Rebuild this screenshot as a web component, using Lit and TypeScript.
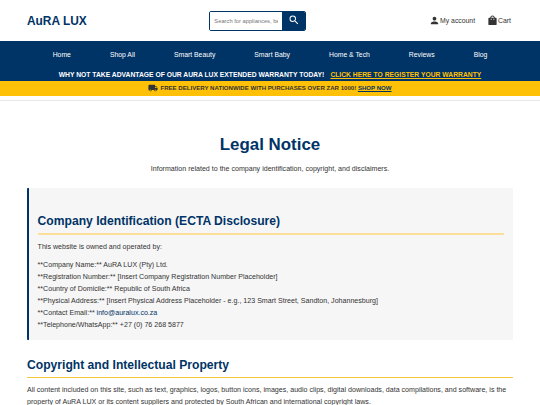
import { LitElement, html, css } from "lit";
import { customElement } from "lit/decorators.js";

const NAV_ITEMS = [
  "Home",
  "Shop All",
  "Smart Beauty",
  "Smart Baby",
  "Home & Tech",
  "Reviews",
  "Blog",
];

@customElement("site-header")
export class SiteHeader extends LitElement {
  static styles = css`
    :host {
      display: block;
      border-bottom: 1px solid #e8e8e8;
      padding-bottom: 4px;
    }
    svg {
      display: block;
      fill: currentColor;
    }
    .top {
      display: flex;
      justify-content: space-between;
      align-items: center;
      height: 41px;
      padding: 0 29px 0 27px;
      box-sizing: border-box;
    }
    .logo {
      font-size: 11.9px;
      font-weight: bold;
      color: #003366;
    }
    .search {
      display: flex;
      width: 97px;
      height: 20px;
      box-sizing: border-box;
      border: 1px solid #003366;
      border-radius: 2px;
      overflow: hidden;
    }
    .search input {
      flex: 1;
      min-width: 0;
      border: none;
      padding: 0 4px;
      font-family: inherit;
      font-size: 5.75px;
      outline: none;
    }
    .search input::placeholder {
      color: #757575;
    }
    .search button {
      width: 23px;
      border: none;
      padding: 0 0 1px;
      display: flex;
      align-items: center;
      justify-content: center;
      background: #003366;
      color: #fff;
    }
    .actions {
      display: flex;
      justify-content: flex-end;
      gap: 12px;
      font-size: 6.85px;
      color: #333;
    }
    .action {
      display: flex;
      align-items: center;
    }
    .nav {
      display: flex;
      justify-content: center;
      align-items: center;
      gap: 39px;
      height: 28px;
      background: #003366;
      color: #fff;
      font-size: 6.83px;
    }
    .warranty {
      display: flex;
      justify-content: center;
      align-items: center;
      gap: 6px;
      height: 12px;
      background: #003366;
      color: #fff;
      font-size: 6.76px;
      font-weight: bold;
    }
    .warranty a {
      color: #ffc107;
      text-decoration: underline;
    }
    .delivery {
      display: flex;
      justify-content: center;
      align-items: center;
      gap: 2px;
      height: 15px;
      padding-bottom: 1px;
      box-sizing: border-box;
      background: #ffc107;
      color: #333;
      font-size: 6.08px;
      font-weight: bold;
    }
    .delivery a {
      color: #003366;
      text-decoration: underline;
    }
  `;

  render() {
    return html`
      <div class="top">
        <div class="logo">AuRA LUX</div>
        <div class="search">
          <input type="text" placeholder="Search for appliances, beauty" />
          <button aria-label="Search">
            <svg width="12" height="12" viewBox="0 0 24 24">
              <path
                d="M15.5 14h-.79l-.28-.27A6.47 6.47 0 0 0 16 9.5 6.5 6.5 0 1 0 9.5 16c1.61 0 3.09-.59 4.23-1.57l.27.28v.79l5 4.99L20.49 19l-4.99-5zm-6 0C7.01 14 5 11.99 5 9.5S7.01 5 9.5 5 14 7.01 14 9.5 11.99 14 9.5 14z"
              />
            </svg>
          </button>
        </div>
        <div class="actions">
          <div class="action">
            <svg width="11" height="11" viewBox="0 0 24 24">
              <path
                d="M12 12c2.21 0 4-1.79 4-4s-1.79-4-4-4-4 1.79-4 4 1.79 4 4 4zm0 2c-2.67 0-8 1.34-8 4v2h16v-2c0-2.66-5.33-4-8-4z"
              />
            </svg>
            <span>My account</span>
          </div>
          <div class="action">
            <svg width="11" height="11" viewBox="0 0 24 24">
              <path
                d="M19 6h-2c0-2.76-2.24-5-5-5S7 3.24 7 6H5c-1.1 0-2 .9-2 2v12c0 1.1.9 2 2 2h14c1.1 0 2-.9 2-2V8c0-1.1-.9-2-2-2zm-9 4c0 .55-.45 1-1 1s-1-.45-1-1V8h2v2zm2-7c1.66 0 3 1.34 3 3H9c0-1.66 1.34-3 3-3zm4 7c0 .55-.45 1-1 1s-1-.45-1-1V8h2v2z"
              />
            </svg>
            <span>Cart</span>
          </div>
        </div>
      </div>
      <nav class="nav">${NAV_ITEMS.map((item) => html`<span>${item}</span>`)}</nav>
      <div class="warranty">
        <span>WHY NOT TAKE ADVANTAGE OF OUR AURA LUX EXTENDED WARRANTY TODAY!</span>
        <a>CLICK HERE TO REGISTER YOUR WARRANTY</a>
      </div>
      <div class="delivery">
        <svg width="10" height="10" viewBox="0 0 24 24">
          <path
            d="M20 8h-3V4H3c-1.1 0-2 .9-2 2v11h2c0 1.66 1.34 3 3 3s3-1.34 3-3h6c0 1.66 1.34 3 3 3s3-1.34 3-3h2v-5l-3-4zM6 18.5c-.83 0-1.5-.67-1.5-1.5s.67-1.5 1.5-1.5 1.5.67 1.5 1.5-.67 1.5-1.5 1.5zm13.5-9l1.96 2.5H17V9.5h2.5zm-1.5 9c-.83 0-1.5-.67-1.5-1.5s.67-1.5 1.5-1.5 1.5.67 1.5 1.5-.67 1.5-1.5 1.5z"
          />
        </svg>
        <span>FREE DELIVERY NATIONWIDE WITH PURCHASES OVER ZAR 1000! <a>SHOP NOW</a></span>
      </div>
    `;
  }
}

@customElement("app-root")
export class AppRoot extends LitElement {
  static styles = css`
    :host {
      display: block;
      height: 405px;
      overflow: hidden;
      background: #fff;
      color: #333;
      font-family: "Liberation Sans", Arial, sans-serif;
      font-size: 7.08px;
      line-height: 12px;
    }
    main {
      padding: 34px 27px 0;
    }
    h1,
    h2,
    p {
      margin: 0;
    }
    h1 {
      font-size: 16.9px;
      line-height: 20px;
      color: #003366;
      text-align: center;
    }
    .intro {
      margin-top: 8px;
      text-align: center;
    }
    h2 {
      font-size: 12.13px;
      line-height: 20px;
      padding-bottom: 2px;
      color: #003366;
      border-bottom: 1px solid #f3c63c;
    }
    .company {
      margin-top: 13px;
      padding: 23px 8.6px 8px;
      height: 152px;
      box-sizing: border-box;
      background: #f6f6f6;
      border-left: 2px solid #003366;
      border-radius: 1px;
    }
    .company h2 {
      border-bottom: 2px solid #fbdf9a;
    }
    .company p {
      margin-top: 6px;
    }
    .company a {
      color: #003366;
    }
    .copyright {
      margin-top: 15px;
    }
    .copyright p {
      margin-top: 6px;
    }
  `;

  render() {
    return html`
      <site-header></site-header>
      <main>
        <h1>Legal Notice</h1>
        <p class="intro">
          Information related to the company identification, copyright, and disclaimers.
        </p>
        <section class="company">
          <h2>Company Identification (ECTA Disclosure)</h2>
          <p>This website is owned and operated by:</p>
          <p>
            **Company Name:** AuRA LUX (Pty) Ltd.<br />
            **Registration Number:** [Insert Company Registration Number Placeholder]<br />
            **Country of Domicile:** Republic of South Africa<br />
            **Physical Address:** [Insert Physical Address Placeholder - e.g., 123 Smart Street,
            Sandton, Johannesburg]<br />
            **Contact Email:** <a>info@auralux.co.za</a><br />
            **Telephone/WhatsApp:** +27 (0) 76 268 5877
          </p>
        </section>
        <section class="copyright">
          <h2>Copyright and Intellectual Property</h2>
          <p>
            All content included on this site, such as text, graphics, logos, button icons, images,
            audio clips, digital downloads, data compilations, and software, is the property of
            AuRA LUX or its content suppliers and protected by South African and international
            copyright laws.
          </p>
        </section>
      </main>
    `;
  }
}
